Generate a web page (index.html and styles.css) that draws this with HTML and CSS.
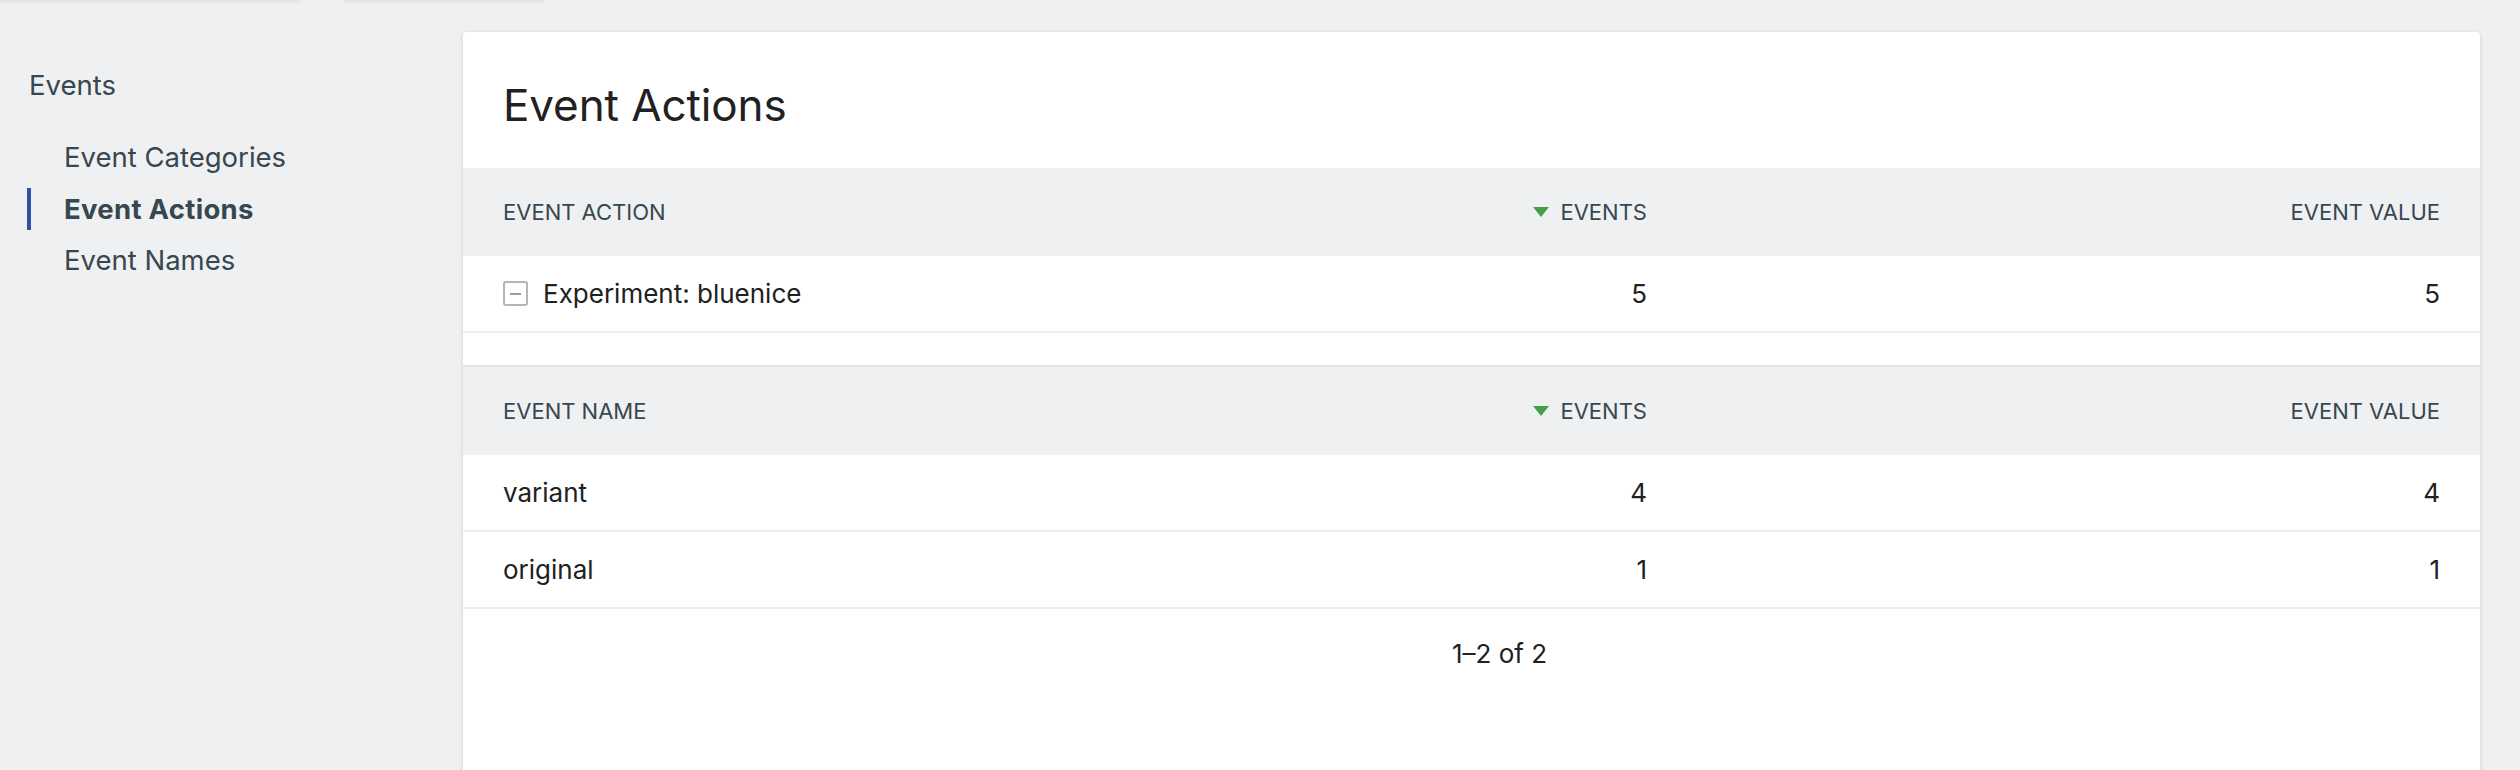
FILE: index.html
```html
<!DOCTYPE html>
<html lang="en">
<head>
<meta charset="utf-8">
<title>Event Actions</title>
<link rel="stylesheet" href="styles.css">
</head>
<body>
<div class="topstrip">
  <div class="stub stub-a"></div>
  <div class="stub stub-b"></div>
</div>
<div class="layout">
  <nav class="sidebar">
    <div class="sidebar-title">Events</div>
    <ul class="menu">
      <li class="menu-item">Event Categories</li>
      <li class="menu-item active">Event Actions</li>
      <li class="menu-item">Event Names</li>
    </ul>
  </nav>
  <main class="card">
    <h1 class="card-title">Event Actions</h1>
    <div class="table">
      <div class="row head">
        <div class="cell">Event Action</div>
        <div class="cell num"><span class="sort"></span>Events</div>
        <div class="cell num">Event Value</div>
      </div>
      <div class="row">
        <div class="cell label"><span class="collapse-icon"></span>Experiment: bluenice</div>
        <div class="cell num">5</div>
        <div class="cell num">5</div>
      </div>
    </div>
    <div class="subtable">
      <div class="row head head-sub">
        <div class="cell">Event Name</div>
        <div class="cell num"><span class="sort"></span>Events</div>
        <div class="cell num">Event Value</div>
      </div>
      <div class="row">
        <div class="cell label">variant</div>
        <div class="cell num">4</div>
        <div class="cell num">4</div>
      </div>
      <div class="row">
        <div class="cell label">original</div>
        <div class="cell num">1</div>
        <div class="cell num">1</div>
      </div>
      <div class="pagination">1–2 of 2</div>
    </div>
  </main>
</div>
</body>
</html>
```

FILE: styles.css
```css
* { box-sizing: border-box; }

html, body {
  margin: 0;
  padding: 0;
  height: 770px;
  overflow: hidden;
}

body {
  background: #eff0f2;
  font-family: Inter, "Noto Sans", sans-serif;
  color: #212121;
}

.topstrip {
  display: flex;
  gap: 43px;
  height: 2px;
}

.stub {
  height: 2px;
  background: #e3e4e6;
  border-radius: 0 0 3px 3px;
  box-shadow: 0 1px 2px rgba(0, 0, 0, 0.06);
}

.stub-a { width: 300px; }
.stub-b { width: 202px; }

.layout {
  display: flex;
  align-items: flex-start;
}

.sidebar {
  width: 463px;
  flex: none;
  padding: 65px 0 0 27px;
  color: #37474f;
}

.sidebar-title {
  font-size: 27.5px;
  line-height: 36px;
  padding-left: 2px;
}

.menu {
  list-style: none;
  margin: 33px 0 0;
  padding: 0;
  display: flex;
  flex-direction: column;
  gap: 9.5px;
}

.menu-item {
  font-size: 27.5px;
  line-height: 42px;
  border-left: 4px solid transparent;
  padding-left: 33px;
}

.menu-item.active {
  border-left-color: #3450a3;
  font-weight: 700;
  letter-spacing: 0.3px;
}

.card {
  flex: 1;
  margin: 30px 40px 0 0;
  background: #fff;
  border-radius: 3px;
  box-shadow: 0 1px 4px rgba(0, 0, 0, 0.14);
  min-height: 800px;
}

.card-title {
  margin: 0;
  padding: 46px 40px 36px;
  font-size: 44px;
  line-height: 54px;
  font-weight: 400;
  letter-spacing: -0.1px;
  color: #212121;
}

.row {
  display: grid;
  grid-template-columns: 1fr 793px 793px;
  align-items: center;
  padding: 0 40px;
  height: 77px;
  border-bottom: 2px solid #eeeeee;
  font-size: 26px;
}

.row.head {
  height: 88px;
  border-bottom: 0;
  background: #eff0f2;
  color: #37474f;
  font-size: 22px;
  text-transform: uppercase;
}

.subtable {
  padding-top: 32px;
}

.row.head-sub {
  height: 90px;
  border-top: 2px solid #e2e3e5;
}

.cell {
  display: flex;
  align-items: center;
}

.cell.num {
  justify-content: flex-end;
}

.sort {
  width: 0;
  height: 0;
  border-left: 8px solid transparent;
  border-right: 8px solid transparent;
  border-top: 10px solid #43a047;
  margin-right: 11px;
}

.collapse-icon {
  width: 25px;
  height: 25px;
  border: 2px solid #b5b5b5;
  border-radius: 3px;
  margin-right: 15px;
  display: flex;
  align-items: center;
  justify-content: center;
}

.collapse-icon::after {
  content: "";
  width: 11px;
  height: 2px;
  background: #9e9e9e;
}

.pagination {
  padding: 27px 0 0 56px;
  text-align: center;
  font-size: 26px;
  line-height: 36px;
}
```
